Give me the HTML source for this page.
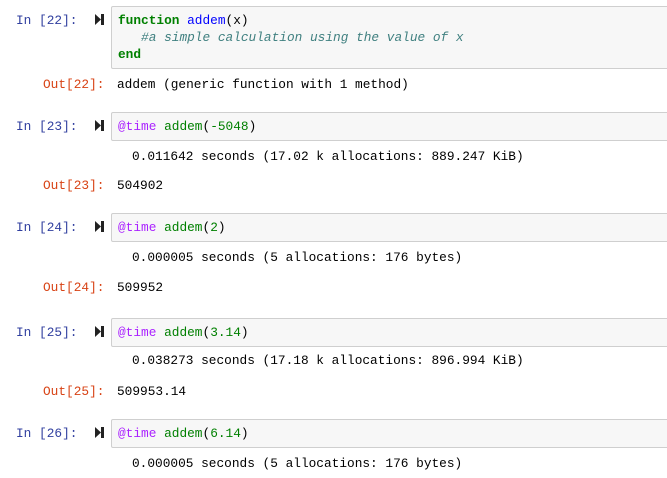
<html><head><style>
body{margin:0;width:667px;height:478px;background:#fff;position:relative;overflow:hidden;font-family:"Liberation Mono",monospace;font-size:12.8px}
.p{position:absolute;white-space:pre;line-height:17px}
.in{color:#303F9F;left:16px}
.out{color:#D84315;left:43px}
.box{position:absolute;left:111px;width:600px;background:#f7f7f7;border:1px solid #cfcfcf;border-radius:2px}
.ic{position:absolute;left:95px;width:9px;height:11px}
.k{color:#008000;font-weight:bold}.f{color:#0000ff}.c{color:#408080;font-style:italic}.m{color:#aa22ff}.g{color:#008000}.n{color:#008000}
</style></head><body>
<div class="box" style="top:6px;height:61px"></div>
<div class="box" style="top:112px;height:27px"></div>
<div class="box" style="top:213px;height:27px"></div>
<div class="box" style="top:318px;height:27px"></div>
<div class="box" style="top:419px;height:27px"></div>
<svg class="ic" style="top:14px" viewBox="0 0 9 11"><path d="M0 0L6 5.5L0 11Z" fill="#222"/><rect x="6" y="0" width="3" height="11" fill="#222"/></svg>
<svg class="ic" style="top:120px" viewBox="0 0 9 11"><path d="M0 0L6 5.5L0 11Z" fill="#222"/><rect x="6" y="0" width="3" height="11" fill="#222"/></svg>
<svg class="ic" style="top:221px" viewBox="0 0 9 11"><path d="M0 0L6 5.5L0 11Z" fill="#222"/><rect x="6" y="0" width="3" height="11" fill="#222"/></svg>
<svg class="ic" style="top:326px" viewBox="0 0 9 11"><path d="M0 0L6 5.5L0 11Z" fill="#222"/><rect x="6" y="0" width="3" height="11" fill="#222"/></svg>
<svg class="ic" style="top:427px" viewBox="0 0 9 11"><path d="M0 0L6 5.5L0 11Z" fill="#222"/><rect x="6" y="0" width="3" height="11" fill="#222"/></svg>

<div class="p in" style="top:12px">In [22]:</div>
<div class="p" style="left:118px;top:12px"><span class="k">function</span> <span class="f">addem</span>(x)
   <span class="c">#a simple calculation using the value of x</span>
<span class="k">end</span></div>
<div class="p out" style="top:76px">Out[22]:</div>
<div class="p" style="left:117px;top:76px">addem (generic function with 1 method)</div>

<div class="p in" style="top:118px">In [23]:</div>
<div class="p" style="left:118px;top:118px"><span class="m">@time</span> <span class="g">addem</span>(<span class="n">-5048</span>)</div>
<div class="p" style="left:132px;top:148px">0.011642 seconds (17.02 k allocations: 889.247 KiB)</div>
<div class="p out" style="top:177px">Out[23]:</div>
<div class="p" style="left:117px;top:177px">504902</div>

<div class="p in" style="top:219px">In [24]:</div>
<div class="p" style="left:118px;top:219px"><span class="m">@time</span> <span class="g">addem</span>(<span class="n">2</span>)</div>
<div class="p" style="left:132px;top:249px">0.000005 seconds (5 allocations: 176 bytes)</div>
<div class="p out" style="top:279px">Out[24]:</div>
<div class="p" style="left:117px;top:279px">509952</div>

<div class="p in" style="top:324px">In [25]:</div>
<div class="p" style="left:118px;top:324px"><span class="m">@time</span> <span class="g">addem</span>(<span class="n">3.14</span>)</div>
<div class="p" style="left:132px;top:352px">0.038273 seconds (17.18 k allocations: 896.994 KiB)</div>
<div class="p out" style="top:383px">Out[25]:</div>
<div class="p" style="left:117px;top:383px">509953.14</div>

<div class="p in" style="top:425px">In [26]:</div>
<div class="p" style="left:118px;top:425px"><span class="m">@time</span> <span class="g">addem</span>(<span class="n">6.14</span>)</div>
<div class="p" style="left:132px;top:455px">0.000005 seconds (5 allocations: 176 bytes)</div>
</body></html>
